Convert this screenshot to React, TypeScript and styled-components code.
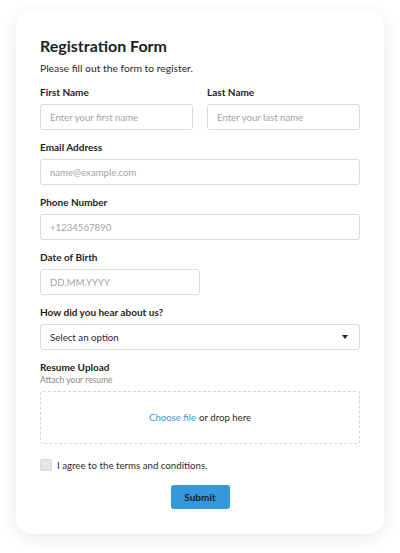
import React from "react";
import styled, { createGlobalStyle } from "styled-components";

const Global = createGlobalStyle`
  html, body { margin: 0; padding: 0; background: #ffffff; }
  body { font-family: "Lato", "Noto Sans", sans-serif; color: #222; }
  * { box-sizing: border-box; }
`;

const Page = styled.div`
  padding: 11px 16px 20px;
`;

const Card = styled.form`
  width: 368px;
  background: #fff;
  border-radius: 16px;
  box-shadow: 0 4px 18px rgba(0, 0, 0, 0.09);
  padding: 24px 24px 25px;
  display: flex;
  flex-direction: column;
`;

const Title = styled.h1`
  margin: 0;
  font-size: 16px;
  line-height: 22px;
  font-weight: 700;
  color: #1e1e1e;
`;

const Subtitle = styled.p`
  margin: 4px 0 11px;
  font-size: 10.3px;
  line-height: 14px;
  color: #2a2a2a;
`;

const Row = styled.div`
  display: grid;
  grid-template-columns: 1fr 1fr;
  column-gap: 14px;
`;

const Field = styled.div<{ $half?: boolean }>`
  display: flex;
  flex-direction: column;
  margin-bottom: 11px;
  width: ${(p) => (p.$half ? "50%" : "100%")};
`;

const Label = styled.label<{ $tight?: boolean }>`
  font-size: 10px;
  line-height: 13px;
  font-weight: 700;
  color: #1e1e1e;
  margin-bottom: ${(p) => (p.$tight ? "1px" : "5px")};
`;

const Hint = styled.span`
  font-size: 8.5px;
  line-height: 11px;
  color: #8a8a8a;
  margin-bottom: 5px;
`;

const Input = styled.input`
  height: 26px;
  width: 100%;
  border: 1px solid #dcdcdc;
  border-radius: 3px;
  padding: 0 9px;
  font-family: inherit;
  font-size: 9.6px;
  color: #333;
  background: #fff;
  outline: none;
  &::placeholder { color: #a3a3a3; }
`;

const SelectBox = styled.div`
  height: 26px;
  border: 1px solid #dcdcdc;
  border-radius: 3px;
  padding: 0 10px 0 9px;
  display: flex;
  align-items: center;
  justify-content: space-between;
  font-size: 9.7px;
  color: #2a2a2a;
`;

const Caret = styled.span`
  width: 0;
  height: 0;
  border-left: 3.5px solid transparent;
  border-right: 3.5px solid transparent;
  border-top: 4px solid #222;
  margin-right: 1px;
`;

const DropZone = styled.div`
  height: 53px;
  border: 1px dashed #d6d6d6;
  border-radius: 3px;
  display: flex;
  align-items: center;
  justify-content: center;
  font-size: 9.6px;
  color: #2a2a2a;
`;

const Link = styled.span`
  color: #3a9ad9;
  margin-right: 3px;
`;

const CheckRow = styled.label`
  display: flex;
  align-items: center;
  gap: 5px;
  margin-top: 3px;
  font-size: 9.7px;
  line-height: 14px;
  color: #2a2a2a;
`;

const Box = styled.span`
  width: 12px;
  height: 12px;
  border-radius: 2px;
  background: #e6e6e6;
  border: 1px solid #dadada;
`;

const Actions = styled.div`
  display: flex;
  justify-content: center;
  margin-top: 13px;
`;

const Submit = styled.button`
  width: 59px;
  height: 24px;
  border: none;
  border-radius: 3px;
  background: #3498db;
  color: #1c1c1c;
  font-family: inherit;
  font-weight: 700;
  font-size: 10px;
  cursor: pointer;
`;

export default function App() {
  return (
    <Page>
      <Global />
      <Card onSubmit={(e) => e.preventDefault()}>
        <Title>Registration Form</Title>
        <Subtitle>Please fill out the form to register.</Subtitle>
        <Row>
          <Field>
            <Label>First Name</Label>
            <Input placeholder="Enter your first name" />
          </Field>
          <Field>
            <Label>Last Name</Label>
            <Input placeholder="Enter your last name" />
          </Field>
        </Row>
        <Field>
          <Label>Email Address</Label>
          <Input placeholder="name@example.com" />
        </Field>
        <Field>
          <Label>Phone Number</Label>
          <Input placeholder="+1234567890" />
        </Field>
        <Field $half>
          <Label>Date of Birth</Label>
          <Input placeholder="DD.MM.YYYY" />
        </Field>
        <Field>
          <Label>How did you hear about us?</Label>
          <SelectBox>
            <span>Select an option</span>
            <Caret />
          </SelectBox>
        </Field>
        <Field>
          <Label $tight>Resume Upload</Label>
          <Hint>Attach your resume</Hint>
          <DropZone>
            <Link>Choose file</Link> or drop here
          </DropZone>
        </Field>
        <CheckRow>
          <Box />
          I agree to the terms and conditions.
        </CheckRow>
        <Actions>
          <Submit type="submit">Submit</Submit>
        </Actions>
      </Card>
    </Page>
  );
}
